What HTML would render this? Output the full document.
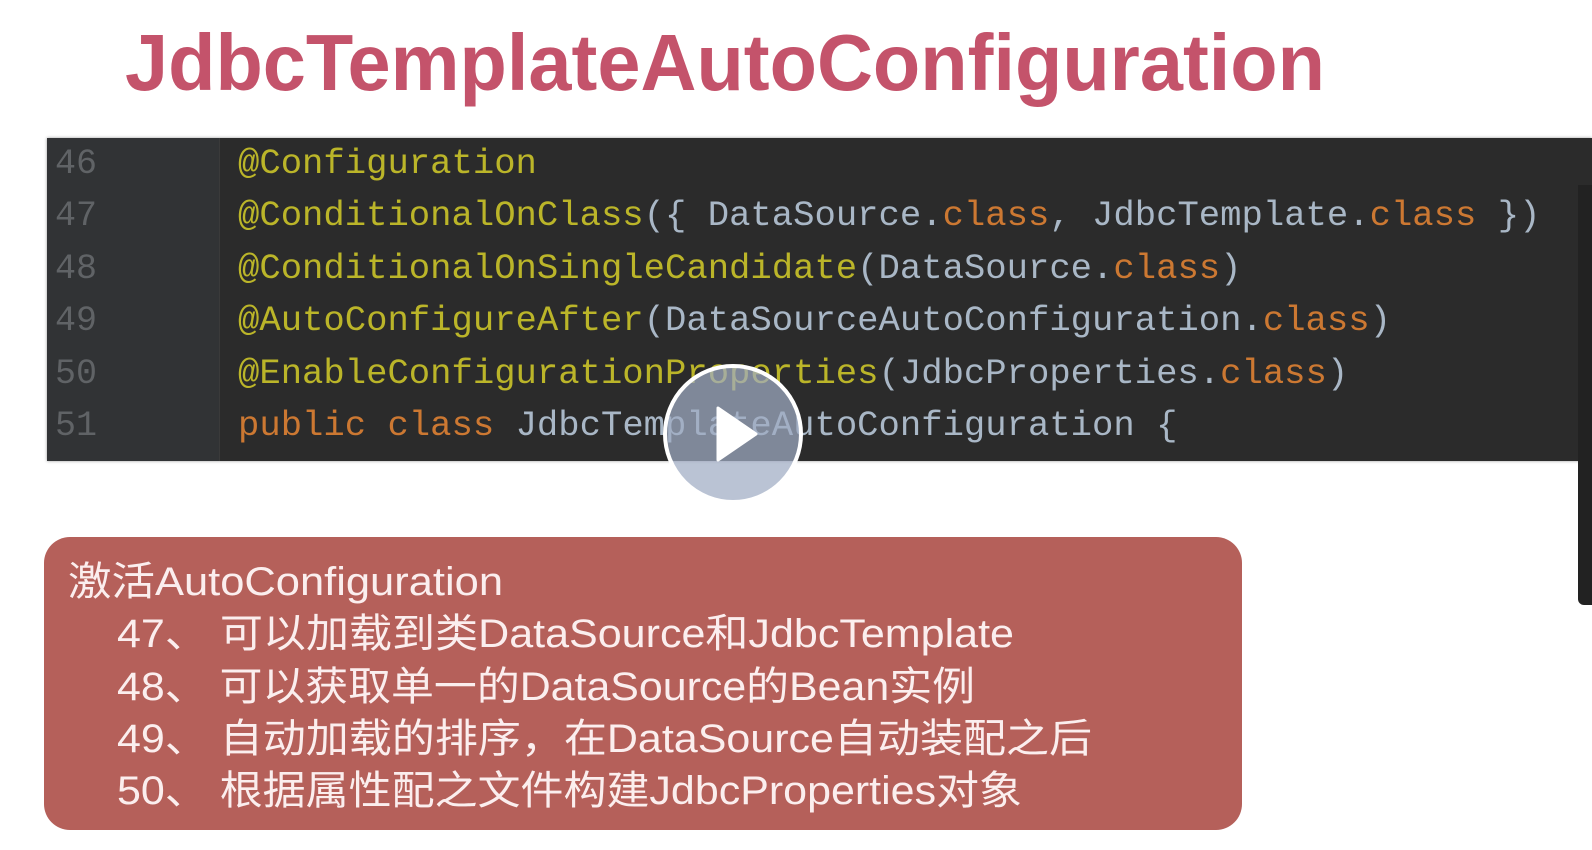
<!DOCTYPE html>
<html><head><meta charset="utf-8"><style>
html,body{margin:0;padding:0;background:#fff;width:1592px;height:850px;overflow:hidden;position:relative}
.code{position:absolute;left:47px;top:138px;width:1545px;height:323px;background:#2b2b2b;box-shadow:0 0 3px #999}
.gut{position:absolute;left:0;top:0;width:172px;height:100%;background:#313335;border-right:1px solid #3a3a3a}
.ln{position:absolute;left:0;top:0;font:35px/52.4px "Liberation Mono",monospace;color:#606366;padding-left:8px;white-space:pre}
.src{position:absolute;left:191px;top:0;font:35.6px/52.4px "Liberation Mono",monospace;color:#a9b7c6;white-space:pre;letter-spacing:0px}
.a{color:#bbb529}.k{color:#cc7832}
.side{position:absolute;left:1578px;top:185px;width:14px;height:420px;background:#222;border-radius:0 0 0 6px}
</style></head><body>
<svg width="1592" height="850" style="position:absolute;left:0;top:0">
<text x="125" y="90" textLength="1200" lengthAdjust="spacingAndGlyphs" font-family="Liberation Sans, sans-serif" font-weight="bold" font-size="80" fill="#c4536b">JdbcTemplateAutoConfiguration</text>
</svg>
<div class="code"><div class="gut"></div>
<div class="ln">46
47
48
49
50
51</div>
<div class="src"><span class="a">@Configuration</span>
<span class="a">@ConditionalOnClass</span>({ DataSource.<span class="k">class</span>, JdbcTemplate.<span class="k">class</span> })
<span class="a">@ConditionalOnSingleCandidate</span>(DataSource.<span class="k">class</span>)
<span class="a">@AutoConfigureAfter</span>(DataSourceAutoConfiguration.<span class="k">class</span>)
<span class="a">@EnableConfigurationProperties</span>(JdbcProperties.<span class="k">class</span>)
<span class="k">public class</span> JdbcTemplateAutoConfiguration {</div>
</div>
<div class="side"></div>
<svg width="1592" height="850" style="position:absolute;left:0;top:0">
<rect x="44" y="537" width="1198" height="293" rx="26" fill="#b5605a"/>
<g font-family="Liberation Sans, Noto Sans CJK SC, sans-serif" font-size="40" fill="#fbeeee">
<text x="68" y="595" textLength="435" lengthAdjust="spacingAndGlyphs">激活AutoConfiguration</text>
<text x="117" y="647" textLength="897" lengthAdjust="spacingAndGlyphs">47、 可以加载到类DataSource和JdbcTemplate</text>
<text x="117" y="700" textLength="858" lengthAdjust="spacingAndGlyphs">48、 可以获取单一的DataSource的Bean实例</text>
<text x="117" y="752" textLength="975" lengthAdjust="spacingAndGlyphs">49、 自动加载的排序，在DataSource自动装配之后</text>
<text x="117" y="804" textLength="905" lengthAdjust="spacingAndGlyphs">50、 根据属性配之文件构建JdbcProperties对象</text>
</g>
<circle cx="733" cy="434" r="68" fill="rgba(160,172,195,0.72)" stroke="#fff" stroke-width="4"/>
<path d="M718 408 L756 434 L718 460 Z" fill="#fff" stroke="#fff" stroke-width="3" stroke-linejoin="round"/>
</svg>
</body></html>
